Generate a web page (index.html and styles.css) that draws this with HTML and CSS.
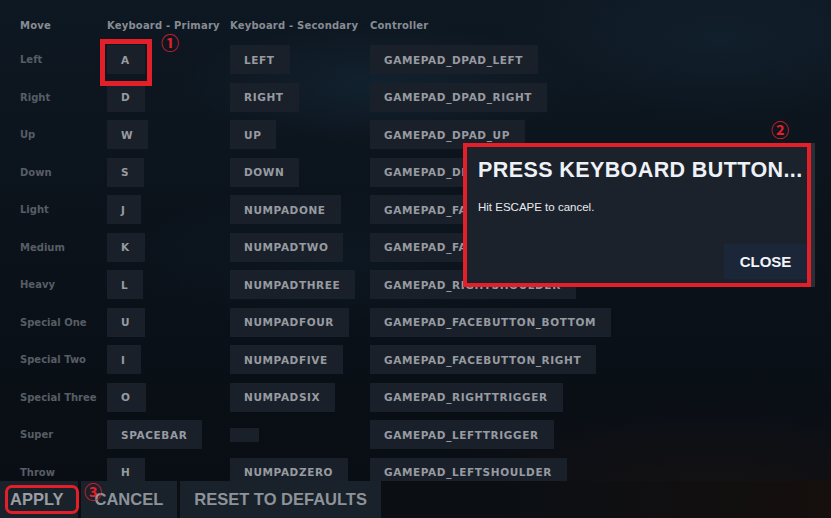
FILE: index.html
```html
<!DOCTYPE html>
<html>
<head>
<meta charset="utf-8">
<link rel="stylesheet" href="styles.css">
</head>
<body>
<div class="screen">
  <div class="table">
    <div class="row head">
      <span>Move</span><span>Keyboard - Primary</span><span>Keyboard - Secondary</span><span>Controller</span>
    </div>
    <div class="row"><span class="lbl">Left</span><span class="key">A</span><span class="key">LEFT</span><span class="key">GAMEPAD_DPAD_LEFT</span></div>
    <div class="row"><span class="lbl">Right</span><span class="key">D</span><span class="key">RIGHT</span><span class="key">GAMEPAD_DPAD_RIGHT</span></div>
    <div class="row"><span class="lbl">Up</span><span class="key">W</span><span class="key">UP</span><span class="key">GAMEPAD_DPAD_UP</span></div>
    <div class="row"><span class="lbl">Down</span><span class="key">S</span><span class="key">DOWN</span><span class="key">GAMEPAD_DPAD_DOWN</span></div>
    <div class="row"><span class="lbl">Light</span><span class="key">J</span><span class="key">NUMPADONE</span><span class="key">GAMEPAD_FACEBUTTON_LEFT</span></div>
    <div class="row"><span class="lbl">Medium</span><span class="key">K</span><span class="key">NUMPADTWO</span><span class="key">GAMEPAD_FACEBUTTON_TOP</span></div>
    <div class="row"><span class="lbl">Heavy</span><span class="key">L</span><span class="key">NUMPADTHREE</span><span class="key">GAMEPAD_RIGHTSHOULDER</span></div>
    <div class="row"><span class="lbl">Special One</span><span class="key">U</span><span class="key">NUMPADFOUR</span><span class="key">GAMEPAD_FACEBUTTON_BOTTOM</span></div>
    <div class="row"><span class="lbl">Special Two</span><span class="key">I</span><span class="key">NUMPADFIVE</span><span class="key">GAMEPAD_FACEBUTTON_RIGHT</span></div>
    <div class="row"><span class="lbl">Special Three</span><span class="key">O</span><span class="key">NUMPADSIX</span><span class="key">GAMEPAD_RIGHTTRIGGER</span></div>
    <div class="row"><span class="lbl">Super</span><span class="key">SPACEBAR</span><span class="key empty"></span><span class="key">GAMEPAD_LEFTTRIGGER</span></div>
    <div class="row"><span class="lbl">Throw</span><span class="key">H</span><span class="key">NUMPADZERO</span><span class="key">GAMEPAD_LEFTSHOULDER</span></div>
  </div>
  <div class="footer">
    <span class="fbtn apply">APPLY</span>
    <span class="fbtn">CANCEL</span>
    <span class="fbtn">RESET TO DEFAULTS</span>
  </div>

  <div class="mark box1"></div>
  <span class="num n1">①</span>

  <div class="modal">
    <div class="modal-in">
      <div class="title">PRESS KEYBOARD BUTTON...</div>
      <div class="msg">Hit ESCAPE to cancel.</div>
      <div class="actions"><span class="close">CLOSE</span></div>
    </div>
  </div>
  <span class="num n2">②</span>

  <div class="mark apply-ring"></div>
  <span class="num n3">③</span>
</div>
</body>
</html>
```

FILE: styles.css
```css
html, body {
  margin: 0;
  padding: 0;
}
body {
  width: 831px;
  height: 518px;
  overflow: hidden;
  background: #0b1119;
}
.screen {
  position: relative;
  width: 831px;
  height: 518px;
  display: flex;
  flex-direction: column;
  overflow: hidden;
  background:
    radial-gradient(ellipse 200px 60px at 380px 85px, rgba(30,60,85,0.3), transparent),
    radial-gradient(ellipse 220px 80px at 720px 40px, rgba(25,50,70,0.3), transparent),
    radial-gradient(ellipse 250px 70px at 350px 260px, rgba(20,45,65,0.2), transparent),
    radial-gradient(ellipse 300px 110px at 710px 510px, rgba(38,24,18,0.45), transparent),
    linear-gradient(180deg, #0e1822 0%, #0b121a 45%, #090d13 100%);
  font-family: "DejaVu Sans", Verdana, sans-serif;
}
.table {
  height: 481px;
  flex: none;
  overflow: hidden;
  padding: 14px 0 0 20px;
  box-sizing: border-box;
  display: flex;
  flex-direction: column;
  gap: 8.5px;
}
.row {
  display: grid;
  grid-template-columns: 87px 123px 140px 1fr;
  align-items: center;
  height: 29px;
  flex: none;
}
.row.head {
  height: 22.5px;
  font-size: 10px;
  font-weight: bold;
  letter-spacing: 0.2px;
  color: #878c93;
}
.lbl {
  font-size: 10px;
  font-weight: bold;
  color: #575d65;
}
.key {
  justify-self: start;
  height: 29px;
  display: inline-flex;
  align-items: center;
  padding: 0 15px 0 14px;
  background: #19202a;
  color: #979ba1;
  font-size: 10.5px;
  font-weight: bold;
  letter-spacing: 0.6px;
  white-space: nowrap;
}
.key.empty {
  height: 14px;
  width: 29px;
  padding: 0;
}
.footer {
  flex: none;
  height: 37px;
  display: flex;
  gap: 3px;
  background: linear-gradient(90deg, #0b0f14 0%, #0b0f14 60%, #150f0d 100%);
}
.fbtn {
  display: flex;
  align-items: center;
  padding: 0 14px;
  background: #19212a;
  color: #8e9399;
  font-family: "Liberation Sans", Arial, sans-serif;
  font-weight: bold;
  font-size: 16.5px;
  white-space: nowrap;
}
.fbtn.apply {
  padding: 0 14px 0 10px;
  color: #9a9ea3;
}
.mark {
  position: absolute;
  box-sizing: border-box;
  border: 5px solid #e3202a;
}
.box1 {
  left: 100px;
  top: 39px;
  width: 52px;
  height: 47px;
}
.apply-ring {
  left: 5px;
  top: 485px;
  width: 74px;
  height: 29px;
  border-width: 3px;
  border-radius: 7px;
}
.num {
  position: absolute;
  color: #e3202a;
  font-family: "Noto Sans CJK JP", "DejaVu Sans", sans-serif;
  font-size: 18px;
  line-height: 18px;
  font-weight: bold;
}
.n1 { left: 161px; top: 33px; }
.n2 { left: 771px; top: 120px; }
.n3 { left: 84px; top: 482px; }
.modal {
  position: absolute;
  left: 463px;
  top: 143px;
  width: 348px;
  height: 144px;
  box-sizing: border-box;
  border: 4px solid #e3202a;
  background: #1c222b;
  box-shadow: 4px 0 0 #2a2f36;
}
.modal-in {
  height: 100%;
  display: flex;
  flex-direction: column;
  font-family: "Liberation Sans", Arial, sans-serif;
}
.title {
  padding: 11px 0 0 11px;
  color: #eef2f7;
  font-size: 21.5px;
  font-weight: bold;
  letter-spacing: 0.4px;
  line-height: 24px;
  white-space: nowrap;
}
.msg {
  padding: 19px 0 0 11px;
  color: #e8ecf0;
  font-size: 11.5px;
}
.actions {
  margin-top: auto;
  display: flex;
  justify-content: flex-end;
  padding-bottom: 4px;
}
.close {
  width: 83px;
  height: 35px;
  display: flex;
  align-items: center;
  justify-content: center;
  background: #1b2638;
  color: #f2f4f7;
  font-weight: bold;
  font-size: 15px;
}
```
